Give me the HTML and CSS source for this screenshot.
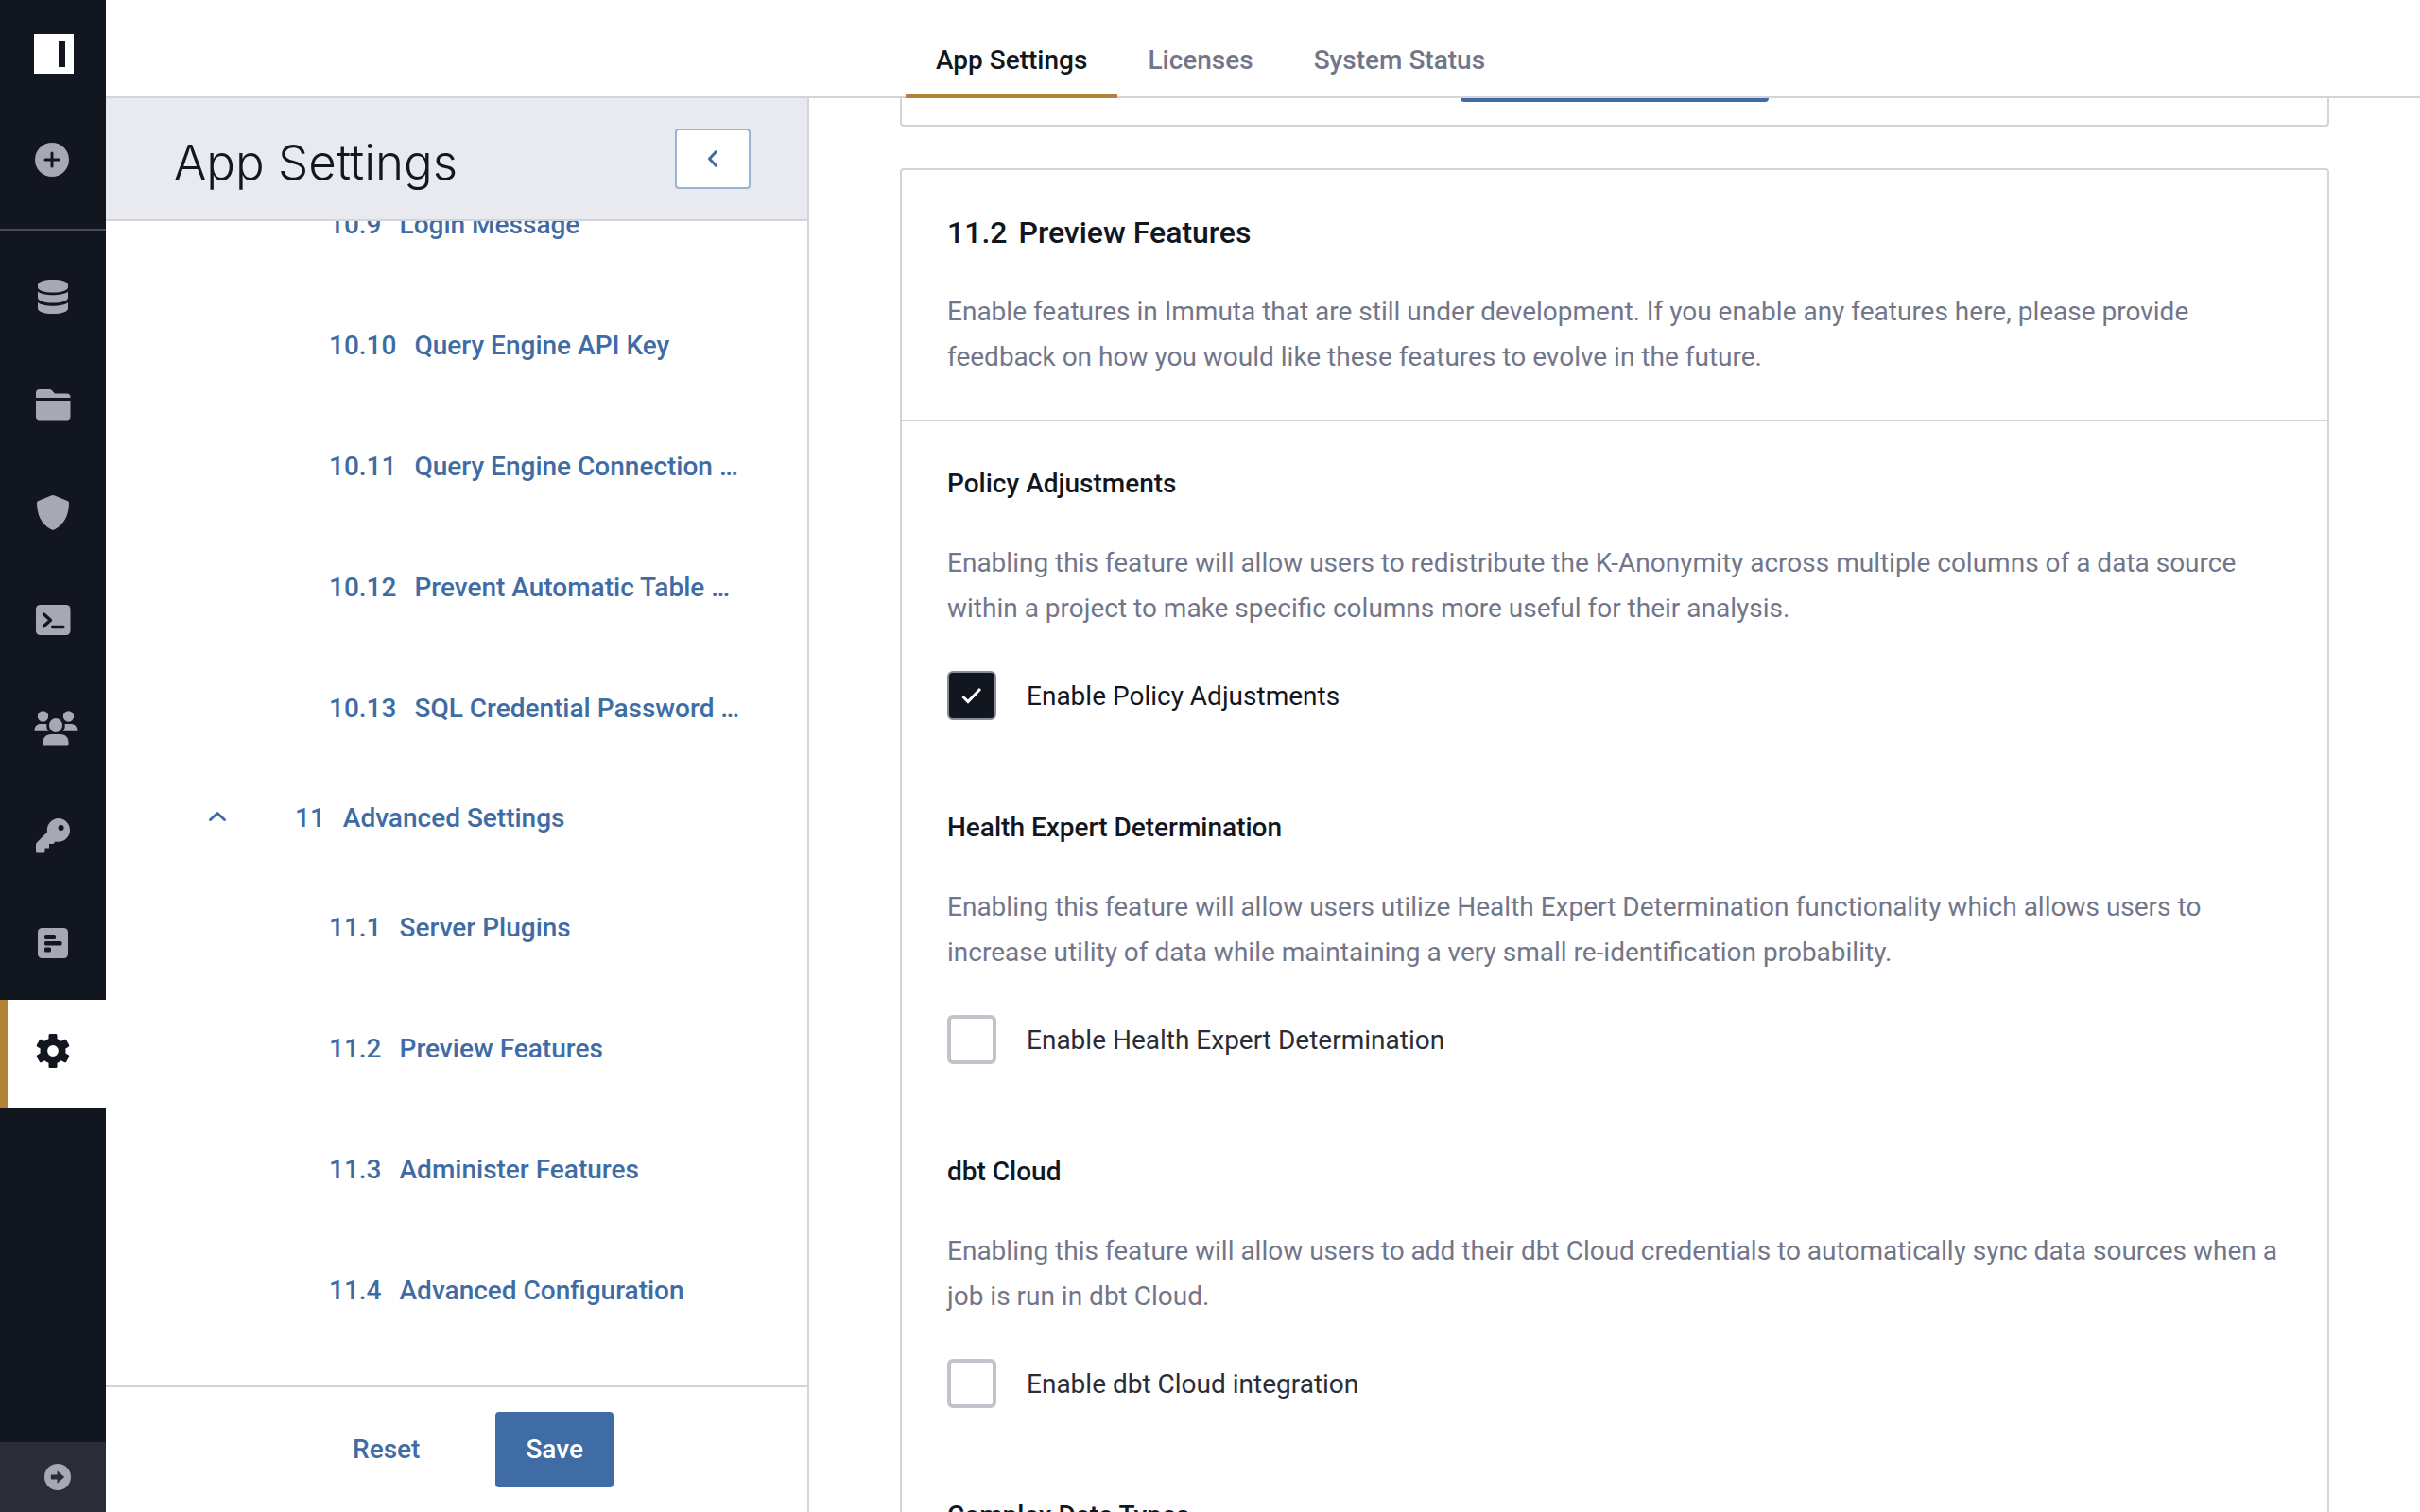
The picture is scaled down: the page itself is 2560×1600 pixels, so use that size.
FILE: index.html
```html
<!DOCTYPE html>
<html lang="en">
<head>
<meta charset="utf-8">
<meta name="viewport" content="width=device-width, initial-scale=1">
<title>App Settings</title>
<link rel="stylesheet" href="styles.css">
</head>
<body>
<div class="app">
  <nav class="rail" aria-label="Main">
    <a class="rail-logo" href="#" aria-label="Home">
      <svg width="42" height="42" viewBox="0 0 42 42"><path fill="#fff" d="M0 0h42v42H0z"/><path fill="#12161e" d="M26 7h7v28h-7z"/></svg>
    </a>
    <a class="rail-add" href="#" aria-label="New">
      <svg width="36" height="36" viewBox="0 0 36 36"><circle cx="18" cy="18" r="18" fill="currentColor"/><path d="M18 11v14M11 18h14" stroke="#12161e" stroke-width="3" stroke-linecap="round"/></svg>
    </a>
    <a class="rail-item" href="#" aria-label="Data">
      <svg width="48" height="40" viewBox="0 0 48 40" fill="currentColor"><path d="M8 7.500C8 4 15 2 24 2s16 2 16 5.500v2.500c0 3.500-7 5.500-16 5.500S8 13.500 8 10z"/><path d="M8 14.500c3 2.500 9 3.700 16 3.700s13-1.200 16-3.700V21c0 3.500-7 5.500-16 5.500S8 24.500 8 21z"/><path d="M8 26c3 2.500 9 3.700 16 3.700S37 28.500 40 26v6.500c0 3.500-7 5.500-16 5.500S8 36 8 32.500z"/></svg>
    </a>
    <a class="rail-item" href="#" aria-label="Projects">
      <svg width="48" height="40" viewBox="0 0 48 40" fill="currentColor"><path d="M6 13V7.500C6 5.500 7.500 4 9.500 4h11c1 0 1.800.4 2.500 1.200L26 8.500h13c2 0 3.500 1.500 3.500 3.500v1z"/><path d="M6 16h36.500v17c0 2-1.500 3.500-3.500 3.500H9.500C7.500 36.500 6 35 6 33z"/></svg>
    </a>
    <a class="rail-item" href="#" aria-label="Policies">
      <svg width="48" height="40" viewBox="0 0 48 40" fill="currentColor"><path d="M22.700 2.200a3 3 0 0 1 2.600 0l14 5.800c1.200.5 1.800 1.500 1.700 2.800-.3 12-4.500 21.500-14.700 27.200a4 4 0 0 1-4.600 0C11.500 32.300 7.300 22.800 7 10.800 6.900 9.500 7.500 8.500 8.700 8z"/></svg>
    </a>
    <a class="rail-item" href="#" aria-label="Query">
      <svg width="48" height="40" viewBox="0 0 48 40"><rect x="6" y="4" width="36.500" height="32" rx="4.500" fill="currentColor"/><path d="M14.500 14l7 6.300-7 6.300M23.500 27.500h11.500" fill="none" stroke="#12161e" stroke-width="3.400" stroke-linecap="round" stroke-linejoin="round"/></svg>
    </a>
    <a class="rail-item rail-item-people" href="#" aria-label="People">
      <svg width="48" height="40" viewBox="0 0 48 40" fill="currentColor"><circle cx="10.500" cy="8" r="5.700"/><circle cx="37.500" cy="8" r="5.700"/><path d="M1.500 23.800v-1C1.500 18.500 4.500 16 8 16h4.500c.8 0 1.400.1 2 .4-.6 3 .1 5.500 2 7.400zM46.500 23.800v-1c0-4.300-3-6.800-6.500-6.800h-4.500c-.8 0-1.400.1-2 .4.600 3-.1 5.500-2 7.400z"/><ellipse cx="24" cy="17.500" rx="7" ry="7.500"/><path d="M10.500 37v-1.500c0-5 3.500-8.500 8.500-8.500h10c5 0 8.500 3.500 8.500 8.500V37c0 1-.5 1.500-1.500 1.500H12c-1 0-1.500-.5-1.500-1.500z"/></svg>
    </a>
    <a class="rail-item" href="#" aria-label="Keys">
      <svg width="48" height="40" viewBox="0 0 48 40"><path fill="currentColor" fill-rule="evenodd" d="M30 2a12.400 12.400 0 1 1-3.500 24.400L24.500 29H20v4.500h-4.500V37c0 1-.5 1.500-1.500 1.500H7.500c-1 0-1.500-.5-1.500-1.500v-7c0-1 .3-1.700 1-2.500l11-11A12.400 12.400 0 0 1 30 2zm2.600 7a3 3 0 1 0 0 6 3 3 0 0 0 0-6z"/></svg>
    </a>
    <a class="rail-item" href="#" aria-label="Reports">
      <svg width="48" height="40" viewBox="0 0 48 40"><rect x="8" y="4" width="32" height="32" rx="4.500" fill="currentColor"/><g fill="#12161e"><rect x="15" y="11" width="12" height="5" rx="1.500"/><rect x="15" y="18" width="18.500" height="4.500" rx="1.500"/><rect x="15" y="24.500" width="7" height="5" rx="1.500"/></g></svg>
    </a>
    <a class="rail-item rail-item-active" href="#" aria-label="App settings" aria-current="page">
      <svg width="48" height="40" viewBox="0 0 48 40"><g fill="currentColor"><g id="tooth"><path d="M19.500 10V3.600c0-1 .7-1.600 1.700-1.600h5.600c1 0 1.700.6 1.700 1.600V10zM19.500 30v6.400c0 1 .7 1.600 1.700 1.600h5.600c1 0 1.700-.6 1.700-1.600V30z"/></g><use href="#tooth" transform="rotate(60 24 20)"/><use href="#tooth" transform="rotate(120 24 20)"/></g><circle cx="24" cy="20" r="9.700" fill="none" stroke="currentColor" stroke-width="7.600"/></svg>
    </a>
    <a class="rail-expand" href="#" aria-label="Expand">
      <svg width="28" height="28" viewBox="0 0 28 28"><circle cx="14" cy="14" r="14" fill="currentColor"/><path d="M8 11.500h5.500V7.200L21.200 14l-7.700 6.800v-4.300H8c-.8 0-1.200-.5-1.200-1.300v-2.400c0-.8.400-1.300 1.200-1.300z" fill="#2b2d36"/></svg>
    </a>
  </nav>

  <header class="topbar">
    <nav class="tabs" aria-label="Sections">
      <a class="tab tab-active" href="#" aria-current="page">App Settings</a>
      <a class="tab" href="#">Licenses</a>
      <a class="tab" href="#">System Status</a>
    </nav>
  </header>

  <aside class="sidebar">
    <div class="sidebar-head">
      <h1 class="sidebar-title">App Settings</h1>
      <button class="collapse" type="button" aria-label="Collapse">
        <svg width="12" height="20" viewBox="0 0 12 20"><path d="M9.500 2.500L2.500 10l7 7.500" fill="none" stroke="currentColor" stroke-width="3" stroke-linecap="round" stroke-linejoin="round"/></svg>
      </button>
    </div>
    <div class="toc">
      <ul class="toc-list">
        <li class="toc-sub"><a href="#"><span>10.9</span><span>Login Message</span></a></li>
        <li class="toc-sub"><a href="#"><span>10.10</span><span>Query Engine API Key</span></a></li>
        <li class="toc-sub"><a href="#"><span>10.11</span><span>Query Engine Connection …</span></a></li>
        <li class="toc-sub"><a href="#"><span>10.12</span><span>Prevent Automatic Table …</span></a></li>
        <li class="toc-sub"><a href="#"><span>10.13</span><span>SQL Credential Password …</span></a></li>
        <li class="toc-main">
          <button class="toc-toggle" type="button" aria-label="Toggle section">
            <svg width="20" height="14" viewBox="0 0 20 14"><path d="M2.500 9.500L10 2.500l7.500 7" fill="none" stroke="currentColor" stroke-width="3" stroke-linecap="round" stroke-linejoin="round"/></svg>
          </button>
          <a href="#"><span>11</span><span>Advanced Settings</span></a>
        </li>
        <li class="toc-sub"><a href="#"><span>11.1</span><span>Server Plugins</span></a></li>
        <li class="toc-sub"><a href="#"><span>11.2</span><span>Preview Features</span></a></li>
        <li class="toc-sub"><a href="#"><span>11.3</span><span>Administer Features</span></a></li>
        <li class="toc-sub"><a href="#"><span>11.4</span><span>Advanced Configuration</span></a></li>
      </ul>
    </div>
    <div class="sidebar-foot">
      <button class="btn btn-text" type="button">Reset</button>
      <button class="btn btn-primary" type="button">Save</button>
    </div>
  </aside>

  <main class="content">
    <div class="content-scroll">
      <section class="card card-previous">
        <button class="btn btn-primary btn-wide" type="button" aria-label="Add"></button>
      </section>
      <section class="card">
        <div class="card-head">
          <h2 class="card-title"><span>11.2</span><span>Preview Features</span></h2>
          <p class="text">Enable features in Immuta that are still under development. If you enable any features here, please provide feedback on how you would like these features to evolve in the future.</p>
        </div>
        <div class="card-body">
          <section class="feature">
            <h3 class="feature-title">Policy Adjustments</h3>
            <p class="text">Enabling this feature will allow users to redistribute the K-Anonymity across multiple columns of a data source within a project to make specific columns more useful for their analysis.</p>
            <label class="check check-on"><span class="box-wrap"><input class="box" type="checkbox" checked><svg class="tick" width="24" height="20" viewBox="0 0 24 20"><path d="M2.500 11l5.500 5.500L21 3" fill="none" stroke="#fff" stroke-width="3"/></svg></span>Enable Policy Adjustments</label>
          </section>
          <section class="feature">
            <h3 class="feature-title">Health Expert Determination</h3>
            <p class="text">Enabling this feature will allow users utilize Health Expert Determination functionality which allows users to increase utility of data while maintaining a very small re-identification probability.</p>
            <label class="check"><input class="box" type="checkbox">Enable Health Expert Determination</label>
          </section>
          <section class="feature">
            <h3 class="feature-title">dbt Cloud</h3>
            <p class="text">Enabling this feature will allow users to add their dbt Cloud credentials to automatically sync data sources when a job is run in dbt Cloud.</p>
            <label class="check"><input class="box" type="checkbox">Enable dbt Cloud integration</label>
          </section>
          <section class="feature">
            <h3 class="feature-title">Complex Data Types</h3>
          </section>
        </div>
      </section>
    </div>
  </main>
</div>
</body>
</html>
```
FILE: styles.css
```css
:root {
  --ink: #12161e;
  --ink-soft: #2b2d36;
  --muted: #72768a;
  --icon: #a6a8b6;
  --line: #d3d4da;
  --blue: #3f6ca4;
  --gold: #b28336;
}

* { box-sizing: border-box; }

body {
  margin: 0;
  font-family: Roboto, "Liberation Sans", sans-serif;
  font-size: 28px;
  color: var(--ink);
  background: #fff;
}

h1, h2, h3, p, ul { margin: 0; padding: 0; }
a { color: inherit; text-decoration: none; }
button { font: inherit; color: inherit; cursor: pointer; }
svg { display: block; }

.app {
  display: grid;
  grid-template-columns: 112px 744px 1fr;
  grid-template-rows: 104px 1fr;
  height: 100vh;
  overflow: hidden;
}

/* Icon rail */
.rail {
  grid-row: 1 / 3;
  display: flex;
  flex-direction: column;
  background: var(--ink);
  color: var(--icon);
}
.rail-logo { padding: 36px 36px 0; height: 104px; }
.rail-add {
  height: 140px;
  padding: 47px 37px 0;
  margin-bottom: 16px;
  border-bottom: 2px solid #484b55;
}
.rail-item {
  height: 114px;
  padding: 34px 32px 0;
}
.rail-item-people { padding-left: 35px; }
.rail-item-active {
  padding-left: 24px;
  border-left: 8px solid var(--gold);
  background: #fff;
  color: var(--ink);
}
.rail-expand {
  display: flex;
  align-items: center;
  margin-top: auto;
  height: 74px;
  padding-left: 47px;
  background: var(--ink-soft);
}

/* Top bar */
.topbar {
  grid-column: 2 / 4;
  padding-left: 846px;
  border-bottom: 2px solid var(--line);
}
.tabs { display: flex; height: 104px; }
.tab {
  padding: 40px 32px 0;
  line-height: 48px;
  font-weight: 500;
  color: var(--muted);
}
.tab-active {
  color: var(--ink);
  border-bottom: 4px solid var(--gold);
}

/* Sidebar */
.sidebar {
  display: flex;
  flex-direction: column;
  min-height: 0;
  border-right: 2px solid var(--line);
  color: var(--blue);
  font-weight: 500;
}
.sidebar-head {
  display: flex;
  align-items: center;
  justify-content: space-between;
  height: 130px;
  padding: 0 60px 0 72px;
  border-bottom: 2px solid var(--line);
  background: #e9eaef;
}
.sidebar-title {
  padding-top: 8px;
  font-family: Inter, Roboto, sans-serif;
  font-weight: 300;
  font-size: 51px;
  line-height: 64px;
  color: var(--ink);
}
.collapse {
  display: flex;
  align-items: center;
  justify-content: center;
  width: 80px;
  height: 64px;
  border: 2px solid #9ab2d2;
  border-radius: 4px;
  background: #fff;
  color: var(--blue);
}
.toc { flex: 1; min-height: 0; overflow: hidden; }
.toc-list { margin-top: -61px; list-style: none; }
.toc-list a { display: flex; gap: 19px; }
.toc-sub {
  display: flex;
  align-items: center;
  height: 128px;
  padding-left: 236px;
}
.toc-main {
  display: flex;
  align-items: center;
  height: 104px;
  padding-left: 108px;
}
.toc-toggle {
  width: 92px;
  padding: 0;
  border: 0;
  background: none;
}
.sidebar-foot {
  display: flex;
  justify-content: center;
  gap: 48px;
  padding: 26px 0 26px 24px;
  border-top: 2px solid var(--line);
}

.btn {
  height: 80px;
  padding: 0 32px 2px;
  border: 0;
  border-radius: 4px;
  font-weight: 500;
}
.btn-text { background: none; color: var(--blue); }
.btn-primary { background: var(--blue); color: #fff; }
.btn-wide { width: 326px; }

/* Content */
.content { min-height: 0; overflow: hidden; }
.content-scroll {
  display: flex;
  flex-direction: column;
  gap: 44px;
  margin-top: -120px;
  padding: 0 96px;
}
.card {
  border: 2px solid var(--line);
  border-radius: 4px;
}
.card-previous {
  display: flex;
  justify-content: center;
  align-items: flex-end;
  height: 150px;
  padding-bottom: 24px;
}
.card-head {
  display: grid;
  gap: 38px;
  padding: 44px 48px 42px;
  border-bottom: 2px solid var(--line);
}
.card-title {
  display: flex;
  gap: 12px;
  font-size: 32px;
  line-height: 44px;
  font-weight: 500;
}
.text { line-height: 48px; color: var(--muted); }
.card-body {
  display: grid;
  gap: 96px;
  padding: 48px;
}
.feature-title {
  margin-bottom: 42px;
  font-size: 28px;
  line-height: 36px;
  font-weight: 500;
}
.check {
  display: flex;
  align-items: center;
  gap: 32px;
  width: fit-content;
  margin-top: 42px;
  color: var(--ink-soft);
}
.check-on { color: var(--ink); }
.box-wrap { position: relative; display: flex; }
.box {
  appearance: none;
  width: 52px;
  height: 52px;
  margin: 0;
  border: 4px solid #c1c3cb;
  border-radius: 6px;
  background: #fff;
}
.box:checked {
  border: 2px solid #8a8d9c;
  background: var(--ink);
}
.tick {
  position: absolute;
  left: 14px;
  top: 16px;
}
```
